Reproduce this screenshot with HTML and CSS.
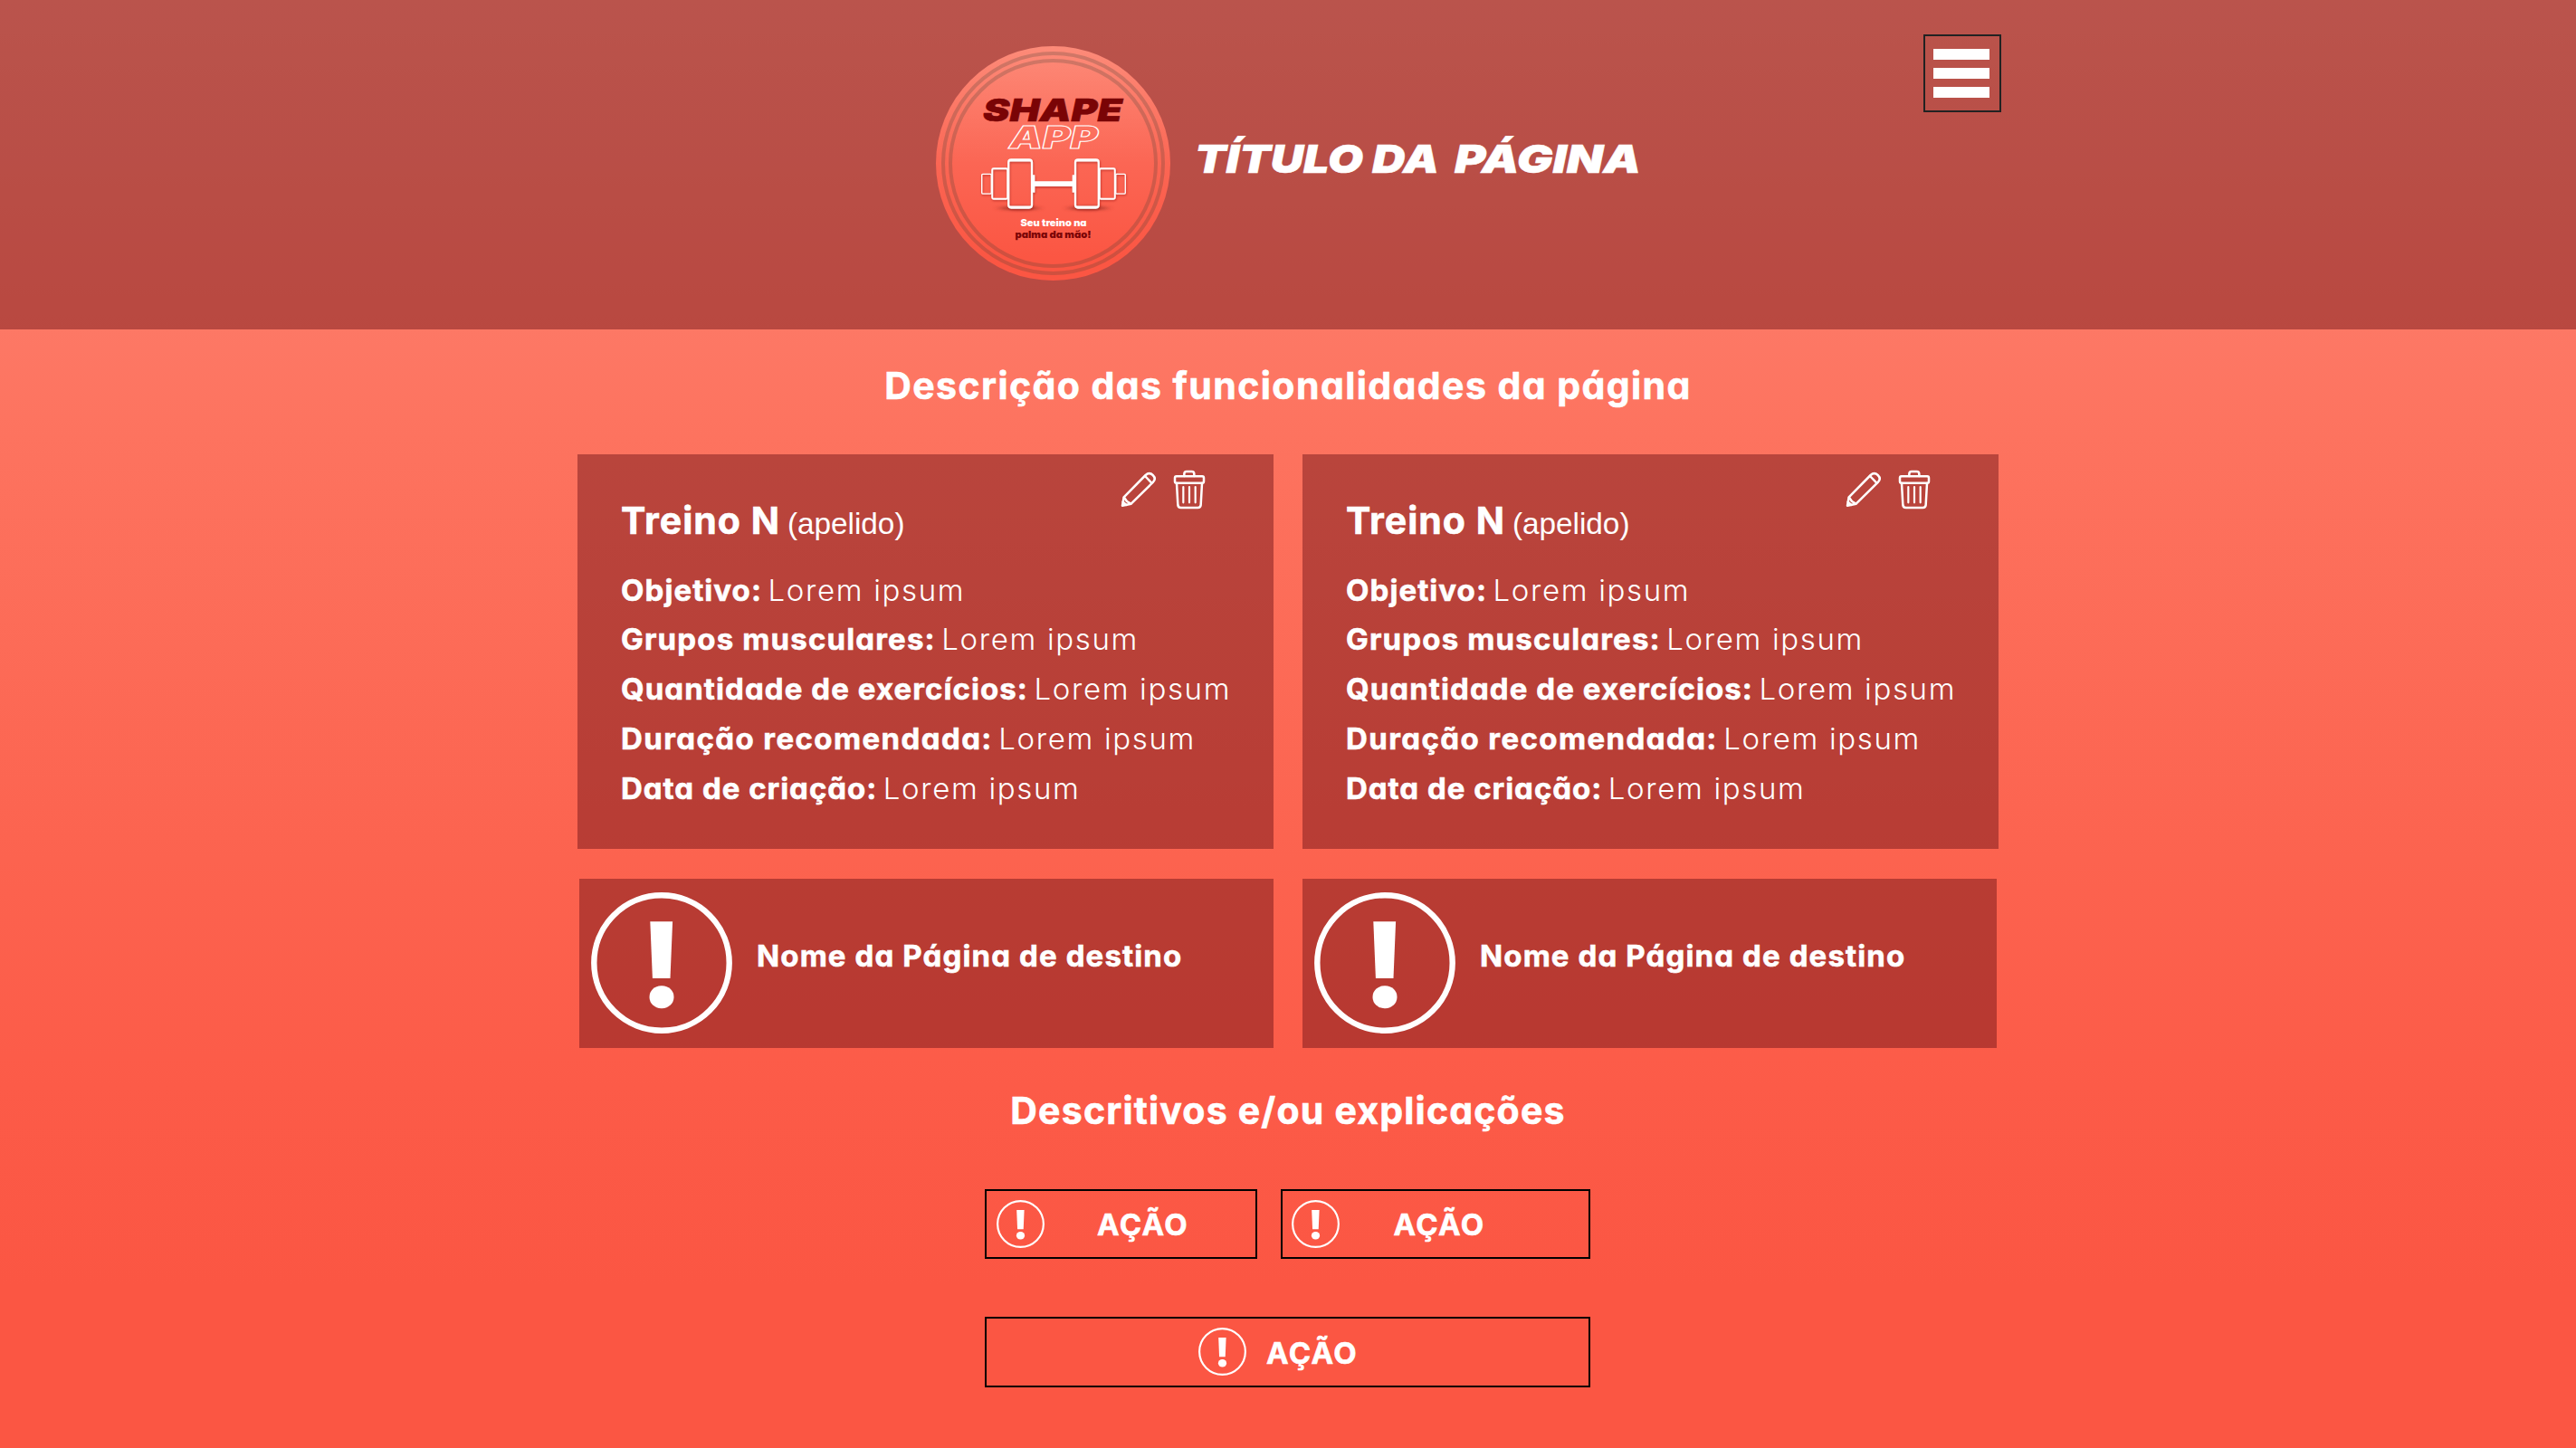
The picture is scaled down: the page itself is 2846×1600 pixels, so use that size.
FILE: index.html
```
<!DOCTYPE html>
<html lang="pt-BR">
<head>
<meta charset="utf-8">
<title>Shape App</title>
<link rel="stylesheet" href="styles.css">
</head>
<body>
<svg class="defs" aria-hidden="true">
  <symbol id="alert" viewBox="0 0 156 156">
    <circle cx="78" cy="78" r="74.7" fill="none" stroke="#fff" stroke-width="6.4"/>
    <path d="M65.3 32.3h24.8l-2.6 62.6H67.9z" fill="#fff"/>
    <rect x="64.5" y="103.2" width="27" height="25" rx="13" ry="12.5" fill="#fff"/>
  </symbol>
  <symbol id="pencil" viewBox="54 58 120 126">
    <g fill="none" stroke="#fff" stroke-width="7.5" stroke-linejoin="round" stroke-linecap="round">
      <path d="M60 177l5-28 72-73q12-11 24 0 12 12 1 23l-73 72z"/>
      <path d="M135 79l22 23M66 150l9 13 13 8M62 165l11 10"/>
    </g>
  </symbol>
  <symbol id="trash" viewBox="228 57 108 132">
    <g fill="none" stroke="#fff" stroke-width="7.5" stroke-linejoin="round" stroke-linecap="round">
      <path d="M265 78v-7q0-8 8-8h17q8 0 8 8v7"/>
      <rect x="234" y="79" width="96" height="22" rx="5"/>
      <path d="M240 102l4 72q1 9 10 9h56q9 0 10-9l4-72"/>
      <path d="M262 114v52M282 114v52M302 114v52" stroke-width="6.5"/>
    </g>
  </symbol>
</svg>

<header class="topbar">
  <svg class="logo" viewBox="0 0 259 259" role="img" aria-label="Shape App">
    <defs>
      <linearGradient id="disc" x1="0" y1="0" x2="0" y2="1">
        <stop offset="0" stop-color="#fd8b79"/>
        <stop offset=".5" stop-color="#fb6654"/>
        <stop offset=".9" stop-color="#fb5643"/>
        <stop offset="1" stop-color="#fb5643"/>
      </linearGradient>
      <filter id="soft" x="-50%" y="-200%" width="200%" height="500%"><feGaussianBlur stdDeviation="4 1.5"/></filter>
      <filter id="drop" x="-10%" y="-10%" width="120%" height="125%"><feDropShadow dx=".6" dy="1.2" stdDeviation=".9" flood-color="#8c140a" flood-opacity=".55"/></filter>
      <g id="weights">
        <rect x="50.7" y="141.3" width="10.6" height="21.8" rx="1" stroke-width="1.3"/>
        <rect x="62.2" y="135.2" width="17" height="33.6" rx="1.5" stroke-width="1.9"/>
        <rect x="80.2" y="125.4" width="25.8" height="53.2" rx="3" stroke-width="2.2"/>
        <path d="M81 126.2h24M81 177.8h24" stroke-width="2.6"/>
        <path d="M108 142.3v19.4" stroke-width="2.6"/>
      </g>
    </defs>
    <circle cx="129.5" cy="129.5" r="129.5" fill="url(#disc)"/>
    <g class="rings">
      <circle cx="129.5" cy="129.5" r="121.5"/>
      <circle cx="129.5" cy="129.5" r="113.5"/>
    </g>
    <text class="logo-shape" x="52" y="82.8" textLength="154" lengthAdjust="spacingAndGlyphs">SHAPE</text>
    <text class="logo-app" x="81" y="112.6" textLength="98" lengthAdjust="spacingAndGlyphs">APP</text>
    <g filter="url(#soft)" fill="#8c2a20" opacity=".6">
      <ellipse cx="92" cy="179" rx="22" ry="2.5"/>
      <ellipse cx="168" cy="179" rx="22" ry="2.5"/>
    </g>
    <g filter="url(#drop)" fill="none" stroke="#fff">
      <use href="#weights"/>
      <use href="#weights" transform="translate(260 0) scale(-1 1)"/>
      <path d="M108 152.2h44" stroke-width="5.8"/>
    </g>
    <text class="logo-tag" x="93.5" y="199" textLength="73" lengthAdjust="spacingAndGlyphs">Seu treino na</text>
    <text class="logo-tag dark" x="87.5" y="212" textLength="84" lengthAdjust="spacingAndGlyphs">palma da mão!</text>
  </svg>
  <h1 class="page-title">
    <svg width="490" height="60" viewBox="0 0 490 60">
      <text x="-3" y="45" textLength="270" lengthAdjust="spacingAndGlyphs">TÍTULO DA</text>
      <text x="284" y="45" textLength="206" lengthAdjust="spacingAndGlyphs">PÁGINA</text>
    </svg>
  </h1>
  <button class="menu" aria-label="Menu"><span></span><span></span><span></span></button>
</header>

<main>
  <h2 class="lead">Descrição das funcionalidades da página</h2>

  <section class="workouts">
    <article class="card">
      <div class="card-head">
        <h3><b>Treino N</b><small>(apelido)</small></h3>
        <div class="tools"><svg class="pencil"><use href="#pencil"/></svg><svg class="trash"><use href="#trash"/></svg></div>
      </div>
      <ul>
        <li><b class="k1">Objetivo:</b><span>Lorem ipsum</span></li>
        <li><b class="k2">Grupos musculares:</b><span>Lorem ipsum</span></li>
        <li><b class="k3">Quantidade de exercícios:</b><span>Lorem ipsum</span></li>
        <li><b class="k4">Duração recomendada:</b><span>Lorem ipsum</span></li>
        <li><b class="k5">Data de criação:</b><span>Lorem ipsum</span></li>
      </ul>
    </article>
    <article class="card">
      <div class="card-head">
        <h3><b>Treino N</b><small>(apelido)</small></h3>
        <div class="tools"><svg class="pencil"><use href="#pencil"/></svg><svg class="trash"><use href="#trash"/></svg></div>
      </div>
      <ul>
        <li><b class="k1">Objetivo:</b><span>Lorem ipsum</span></li>
        <li><b class="k2">Grupos musculares:</b><span>Lorem ipsum</span></li>
        <li><b class="k3">Quantidade de exercícios:</b><span>Lorem ipsum</span></li>
        <li><b class="k4">Duração recomendada:</b><span>Lorem ipsum</span></li>
        <li><b class="k5">Data de criação:</b><span>Lorem ipsum</span></li>
      </ul>
    </article>
  </section>

  <nav class="links">
    <a class="link"><svg><use href="#alert"/></svg><span>Nome da Página de destino</span></a>
    <a class="link"><svg><use href="#alert"/></svg><span>Nome da Página de destino</span></a>
  </nav>

  <h2 class="notes">Descritivos e/ou explicações</h2>

  <div class="actions">
    <button class="action first"><svg><use href="#alert"/></svg><span>AÇÃO</span></button>
    <button class="action second"><svg><use href="#alert"/></svg><span>AÇÃO</span></button>
    <button class="action wide"><svg><use href="#alert"/></svg><span>AÇÃO</span></button>
  </div>
</main>
</body>
</html>
```
FILE: styles.css
```
:root {
  --shade: rgba(98, 12, 19, .44);
}

* { box-sizing: border-box; }

body {
  margin: 0;
  min-height: 1600px;
  color: #fff;
  font-family: Inter, "Open Sans", sans-serif;
  font-feature-settings: "cv11" 1;
  background: linear-gradient(#ff8d7a 0, #fd7865 364px, #fd735f 480px, #fc634f 950px, #fc5b48 1200px, #fb5643 1420px, #fb5643 1600px);
}

h1, h2, h3, ul { margin: 0; padding: 0; }
svg { display: block; overflow: visible; }
.defs { display: none; }

button {
  appearance: none;
  padding: 0;
  border: 0;
  border-radius: 0;
  background: none;
  color: inherit;
  font: inherit;
  font-feature-settings: inherit;
}

/* Header */
.topbar {
  display: flex;
  align-items: flex-start;
  height: 364.4px;
  padding-left: 1034px;
  padding-right: 635.5px;
  background: var(--shade);
}

.logo {
  width: 259px;
  height: 259px;
  margin-top: 51px;
}

.rings { fill: none; stroke: rgba(60, 60, 50, .23); stroke-width: 4; }
.logo-shape { font: italic 900 34px Inter, sans-serif; fill: #7a0406; stroke: #7a0406; stroke-width: .6; }
.logo-app { font: italic 900 34px Inter, sans-serif; fill: none; stroke: #fff; stroke-width: 1; }
.logo-tag { font: 900 10.8px Inter, sans-serif; fill: #fff; font-feature-settings: "cv11" 1; }
.logo-tag.dark { fill: #7a0406; }

.page-title { margin: 146px 0 0 30px; }
.page-title text { font: italic 900 43px Inter, sans-serif; fill: #fff; stroke: #fff; stroke-width: .5; }

.menu {
  display: flex;
  flex-direction: column;
  gap: 9px;
  width: 85.5px;
  height: 86px;
  margin: 38px 0 0 auto;
  padding: 14.3px 0 0 9px;
  border: 2px solid #222;
}

.menu span { width: 62px; height: 11.9px; background: #fff; }

/* Headings */
main { display: flex; flex-direction: column; align-items: center; }
h2 { font-size: 41px; line-height: 60px; font-weight: 700; white-space: nowrap; }
h2, .card b, .link, .action { -webkit-text-stroke: .6px #fff; }
.lead { margin-top: 31.6px; letter-spacing: 1.43px; }
.notes { margin-top: 39px; letter-spacing: 1.2px; }

/* Workout cards */
.workouts {
  display: grid;
  grid-template-columns: 769px 769px;
  gap: 32px;
  margin-top: 46px;
}

.card { height: 435.7px; padding: 0 0 0 48px; background: var(--shade); white-space: nowrap; }
.card-head { display: flex; justify-content: space-between; align-items: flex-start; padding-right: 75px; }
.card h3 { display: flex; align-items: baseline; gap: 8px; margin-top: 43px; line-height: 60px; font-size: 41px; }
.card h3 b { font-weight: 700; letter-spacing: 1px; }
.card h3 small { font: 33.3px "Liberation Sans", Arial, sans-serif; }

.tools { display: flex; gap: 18px; margin-top: 15.2px; }
.pencil { width: 40px; height: 42px; margin-top: 2.3px; }
.trash { width: 36px; height: 44px; margin-top: 1.7px; }

.card ul { margin-top: 19.6px; list-style: none; }
.card li { display: flex; gap: 6.5px; font-size: 33px; line-height: 54.8px; font-weight: 300; }
.card li b { font-weight: 700; }
.card li span { letter-spacing: 1.65px; }
.k1 { letter-spacing: 1.08px; }
.k2 { letter-spacing: 1.17px; }
.k3 { letter-spacing: 1.08px; }
.k4 { letter-spacing: 1.41px; }
.k5 { letter-spacing: .98px; }

/* Destination links */
.links {
  display: grid;
  grid-template-columns: 767px 767px;
  gap: 32px;
  margin-top: 33px;
}

.link {
  display: flex;
  gap: 27px;
  height: 187px;
  padding: 15.2px 0 0 13px;
  background: var(--shade);
  font-size: 33px;
  font-weight: 700;
  letter-spacing: 1.12px;
  line-height: 40px;
  white-space: nowrap;
}

.link svg { width: 156px; height: 156px; }
.link span { margin-top: 50px; }

/* Actions */
.actions {
  display: grid;
  grid-template-columns: 301px 342px;
  column-gap: 26px;
  row-gap: 64px;
  margin: 57px 1px 0 0;
}

.action {
  display: flex;
  align-items: center;
  height: 77px;
  border: 2px solid #000;
  font-size: 33px;
  font-weight: 700;
  letter-spacing: 1.4px;
  line-height: 40px;
}

.action svg { width: 53px; height: 53px; }
.action span { margin-top: 2px; }
.first { padding-left: 11px; gap: 58px; }
.second { padding-left: 10px; gap: 59.5px; }
.wide { grid-column: 1 / -1; height: 78px; padding-left: 234px; gap: 22px; border-width: 2.5px; }
```
